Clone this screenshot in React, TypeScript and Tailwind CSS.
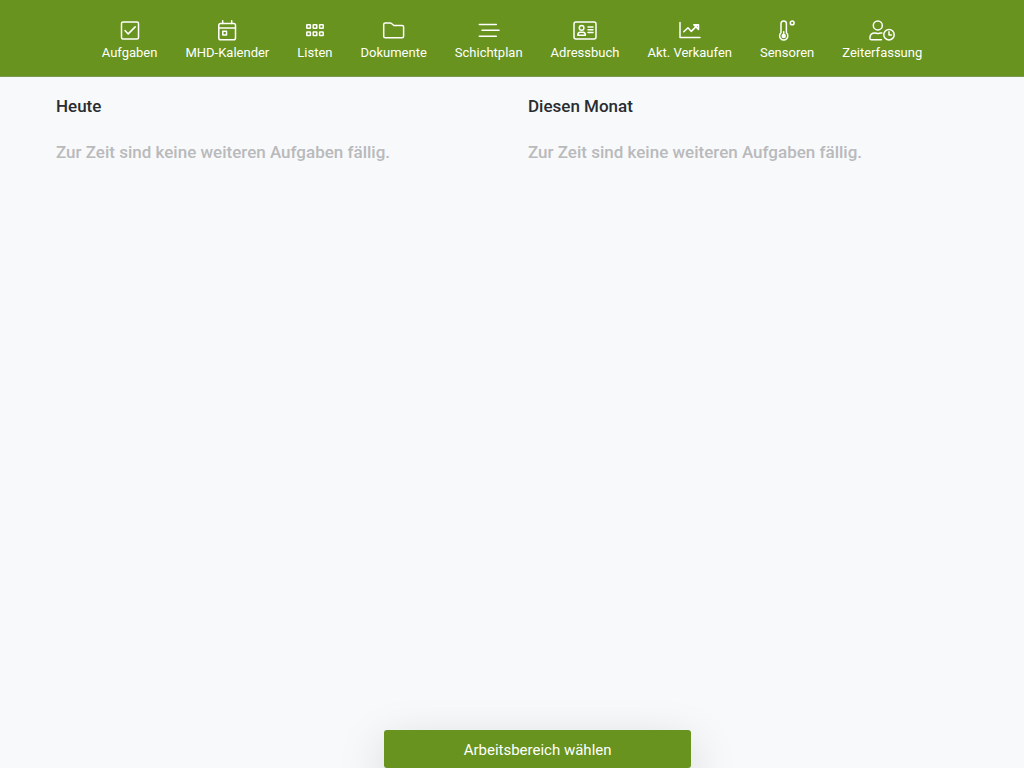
import type { ReactNode } from "react";

type NavItem = {
    label: string;
    icon: ReactNode;
};

const navItems: NavItem[] = [
    {
        label: "Aufgaben",
        icon: (
            <>
                <rect x="5.5" y="3" width="17" height="17" rx="1.5" />
                <path d="M9 11.5l3.2 3.4 7-7" />
            </>
        ),
    },
    {
        label: "MHD-Kalender",
        icon: (
            <>
                <rect x="5.8" y="4.5" width="16.7" height="16.3" rx="1.8" />
                <path d="M9.7 1.8v2.7M18.7 1.8v2.7M6 9h16.5" />
                <rect x="9.8" y="12.3" width="3.7" height="3.7" />
            </>
        ),
    },
    {
        label: "Listen",
        icon: (
            <>
                <rect x="5.8" y="5.7" width="3.6" height="3.6" rx="0.4" />
                <rect x="12.2" y="5.7" width="3.6" height="3.6" rx="0.4" />
                <rect x="18.6" y="5.7" width="3.6" height="3.6" rx="0.4" />
                <rect x="5.8" y="13" width="3.6" height="3.6" rx="0.4" />
                <rect x="12.2" y="13" width="3.6" height="3.6" rx="0.4" />
                <rect x="18.6" y="13" width="3.6" height="3.6" rx="0.4" />
            </>
        ),
    },
    {
        label: "Dokumente",
        icon: <path d="M5.2 4h4.9q.8 0 1.4.5l2.4 2h8.2q1.5 0 1.5 1.5v9.2q0 1.5-1.5 1.5H5.2q-1.5 0-1.5-1.5V5.5Q3.7 4 5.2 4z" />,
    },
    {
        label: "Schichtplan",
        icon: <path d="M4.3 5.4h17M7 11.3h17M4.3 17.2h17" />,
    },
    {
        label: "Adressbuch",
        icon: (
            <>
                <rect x="3" y="3" width="22" height="17" rx="2" />
                <circle cx="10.6" cy="8.9" r="2.3" />
                <path d="M6.8 16.3c0-2 1-3 2.4-3h2.8c1.4 0 2.4 1 2.4 3zM17 8h5M17 10.8h5M17 13.6h5" />
            </>
        ),
    },
    {
        label: "Akt. Verkaufen",
        icon: <path d="M4 3.6v14.9h20M7.8 12.8l4.2-4 3.3 3.6 5.9-6M17.8 5.7h4.7v4.7z" />,
    },
    {
        label: "Sensoren",
        icon: (
            <>
                <path d="M8 13.8V4.6a2.7 2.7 0 0 1 5.4 0v9.2a4.1 4.1 0 1 1-5.4 0z" />
                <circle cx="10.7" cy="17" r="1.5" fill="currentColor" />
                <path d="M10.7 12.8v4" />
                <circle cx="19.2" cy="3.9" r="1.9" />
            </>
        ),
    },
    {
        label: "Zeiterfassung",
        icon: (
            <>
                <circle cx="9.8" cy="6.4" r="4.5" />
                <path d="M13.5 20.8H3.5q-1.6 0-1.6-1.6c0-3.2 2-5.2 5-5.2 1.6 0 1.6.6 3 .6s1.5-.6 3-.6h1" />
                <circle cx="21" cy="15.7" r="5.2" />
                <path d="M21 12.8v3.1h2.5" />
            </>
        ),
    },
];

export default function App() {
    return (
        <div className="flex min-h-screen flex-col bg-[#f8f9fb] font-['Roboto',sans-serif] text-[#292c30]">
            <Navbar />
            <main className="mx-10 grid grow grid-cols-2">
                <TaskColumn title="Heute" />
                <TaskColumn title="Diesen Monat" />
            </main>
            <button
                type="button"
                className="ml-[37.5%] w-[30%] rounded-[3px] bg-[#67931e] pt-2 pb-1.5 text-[15px] leading-6 text-white shadow-[0_16px_48px_rgba(0,0,0,0.175)]"
            >
                Arbeitsbereich wählen
            </button>
        </div>
    );
}

function Navbar() {
    return (
        <nav className="flex justify-center gap-7 border-b border-[#7d9a52] bg-[#67931e] pt-[19px] pb-3 text-white">
            {navItems.map((item) => (
                <a key={item.label} href="#" className="flex flex-col items-center text-[13px] leading-[22px] whitespace-nowrap">
                    <svg
                        width="28"
                        height="23"
                        viewBox="0 0 28 23"
                        fill="none"
                        stroke="currentColor"
                        strokeWidth="1.5"
                        strokeLinecap="round"
                        strokeLinejoin="round"
                        aria-hidden="true"
                    >
                        {item.icon}
                    </svg>
                    {item.label}
                </a>
            ))}
        </nav>
    );
}

function TaskColumn({ title }: { title: string }) {
    return (
        <section className="px-4 pt-4 text-[17px] leading-[26px] font-medium">
            <h2 className="mb-5">{title}</h2>
            <p className="text-[#b8babc]">Zur Zeit sind keine weiteren Aufgaben fällig.</p>
        </section>
    );
}
